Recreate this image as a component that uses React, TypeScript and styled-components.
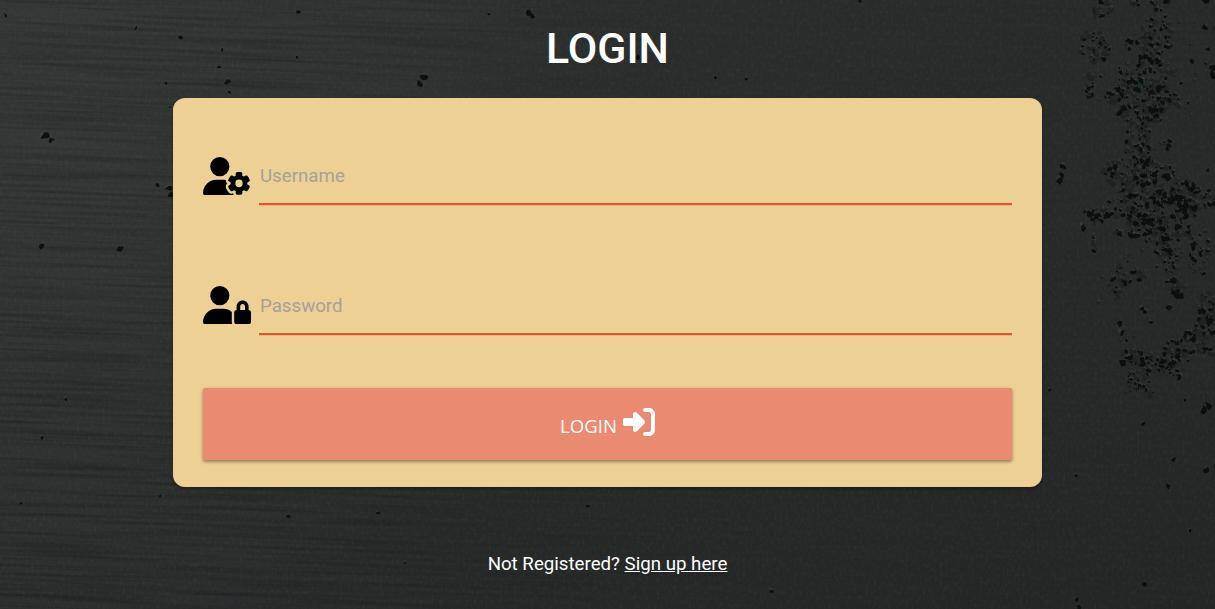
import React from 'react';
import styled, { createGlobalStyle } from 'styled-components';
import { FaUserGear, FaUserLock, FaRightToBracket } from 'react-icons/fa6';

const GlobalStyle = createGlobalStyle`
  * { box-sizing: border-box; }
  body {
    margin: 0;
    background: #272b2b;
    font-family: Roboto, "Liberation Sans", sans-serif;
    overflow: hidden;
  }
`;

const Page = styled.main`
  position: relative;
  height: 100vh;
  display: flex;
  flex-direction: column;
  align-items: center;
  isolation: isolate;
`;

const Wall = styled.svg`
  position: absolute;
  inset: 0;
  z-index: -1;
`;

const Title = styled.h1`
  margin: 0;
  padding-top: 24px;
  height: 98px;
  font-size: 42.8px;
  line-height: 48px;
  font-weight: 500;
  color: #fff;
`;

const Card = styled.form`
  width: 869px;
  height: 389px;
  padding: 30px;
  display: flex;
  flex-direction: column;
  background: #edd194;
  border-radius: 12px;
  box-shadow: 0 2px 3px rgba(0, 0, 0, 0.3);
`;

const Field = styled.label`
  height: 130px;
  flex: none;
  display: flex;
  align-items: flex-start;
  gap: 8px;
  padding-top: 22px;
`;

const FieldIcon = styled.span<{ $top: number }>`
  display: flex;
  width: 48px;
  padding-top: ${(p) => p.$top}px;
  color: #000;
`;

const Input = styled.input`
  flex: 1;
  min-width: 0;
  height: 55px;
  padding: 0 0 1px 1px;
  border: 0;
  border-bottom: 2px solid #dd5437;
  box-shadow: 0 1px 0 rgba(240, 110, 70, 0.3);
  background: transparent;
  font: 400 18.7px Roboto, sans-serif;
  outline: none;
  &::placeholder { color: #a5a19b; opacity: 1; }
`;

const Submit = styled.button`
  height: 72px;
  flex: none;
  display: flex;
  align-items: center;
  justify-content: center;
  gap: 6px;
  padding: 0;
  border: 0;
  border-radius: 2px;
  background: #e98a71;
  color: #fff;
  font: 400 18.6px "Open Sans", "Noto Sans", sans-serif;
  box-shadow: 0 2px 3px rgba(0, 0, 0, 0.3), 0 1px 5px rgba(0, 0, 0, 0.14);
`;

const SubmitLabel = styled.span`
  padding-top: 3px;
`;

const SubmitIcon = styled(FaRightToBracket)`
  margin-top: -5px;
`;

const Footer = styled.p`
  margin: 64px 0 0;
  font-size: 18.7px;
  line-height: 26px;
  color: #fff;
`;

const SignUp = styled.a`
  color: inherit;
  text-decoration: underline;
`;

// Small repeatable generator so the wall looks the same on every load.
const seeded = (seed: number) => () => {
  seed = (seed * 1664525 + 1013904223) % 4294967296;
  return seed / 4294967296;
};

// Areas of flaked paint: centre x, centre y, radius x, radius y, flakes.
const patches = [
  [1101, 9, 12, 11, 12], [1160, 4, 10, 7, 8], [1136, 3, 4, 3, 4],
  [1095, 47, 16, 16, 30], [1089, 86, 5, 12, 9], [1155, 36, 20, 18, 45],
  [1131, 43, 8, 6, 7], [1155, 57, 18, 6, 18], [1147, 76, 29, 16, 60],
  [1143, 97, 38, 14, 95], [1142, 115, 24, 9, 42], [1136, 133, 14, 14, 24],
  [1140, 152, 15, 8, 22], [1166, 143, 6, 7, 7], [1138, 172, 38, 14, 90],
  [1158, 190, 42, 13, 75], [1152, 209, 49, 15, 120], [1191, 199, 24, 13, 38],
  [1154, 230, 38, 13, 70], [1095, 215, 13, 8, 13], [1094, 243, 4, 8, 7],
  [1169, 253, 13, 20, 40], [1199, 253, 12, 24, 23], [1120, 281, 11, 16, 19],
  [1139, 274, 7, 6, 8], [1176, 289, 9, 9, 15], [1208, 305, 10, 13, 15],
  [1207, 323, 13, 15, 36], [1193, 342, 12, 12, 22], [1137, 358, 18, 8, 28],
  [1158, 365, 15, 8, 22], [1175, 351, 13, 11, 22], [1139, 379, 13, 12, 22],
  [1177, 370, 7, 9, 9], [1206, 352, 7, 6, 8], [1140, 392, 16, 6, 8],
  [1160, 70, 75, 65, 25], [1155, 300, 60, 80, 22],
];

// Isolated pits: x, y, size.
const pits = [
  [6, 16, 3], [46, 136, 5], [51, 140, 4], [43, 137, 4], [42, 246, 3.5], [121, 249, 5],
  [181, 38, 3], [219, 67, 2], [222, 50, 2.2], [227, 82, 3.5], [229, 92, 2], [166, 83, 2],
  [170, 107, 2], [136, 28, 1.8], [158, 185, 3], [169, 188, 5], [171, 195, 4], [297, 57, 2],
  [299, 12, 3], [424, 77, 4], [420, 84, 4], [489, 14, 1.8], [528, 13, 4], [532, 16, 3],
  [638, 57, 3], [715, 78, 2.5], [746, 79, 1.8], [860, 1, 2], [1063, 166, 4], [1060, 181, 5],
  [1062, 175, 3], [1206, 2, 4], [1213, 68, 5], [1214, 75, 5], [1192, 61, 2.5], [1188, 103, 2.5],
  [1208, 49, 2.5], [1208, 170, 2.5], [1083, 227, 4], [1084, 229, 3], [1120, 325, 4],
  [1122, 333, 4], [1170, 308, 4], [1142, 308, 3], [1151, 322, 2], [1050, 390, 2],
  [1203, 411, 5], [1208, 406, 4], [1185, 400, 2], [1143, 424, 2.5], [1173, 460, 3],
  [1206, 470, 3.5], [1168, 486, 3], [1076, 475, 2], [1190, 531, 2], [1145, 584, 3],
  [1077, 600, 4], [1079, 607, 3], [378, 513, 2.8], [288, 516, 2.5], [21, 503, 1.8],
  [66, 399, 2], [42, 438, 2], [405, 563, 1.8], [772, 591, 2.5], [588, 506, 1.8], [160, 496, 1.5],
];

const flake = (x: number, y: number, r: number, rnd: () => number) => {
  const tilt = rnd() * 3.14;
  const points = Array.from({ length: 7 }, (_, i) => {
    const a = (i / 7) * Math.PI * 2;
    const d = r * (0.45 + rnd() * 0.8);
    const px = Math.cos(a) * d;
    const py = Math.sin(a) * d * 0.7;
    return `${(x + px * Math.cos(tilt) - py * Math.sin(tilt)).toFixed(1)} ${(y + px * Math.sin(tilt) + py * Math.cos(tilt)).toFixed(1)}`;
  });
  return `M${points.join('L')}Z`;
};

const buildFlakes = () => {
  const rnd = seeded(91);
  let dark = '';
  let soft = '';
  let light = '';
  for (const [cx, cy, rx, ry, count] of patches) {
    for (let i = 0; i < count * 1.3; i++) {
      const a = rnd() * Math.PI * 2;
      const d = Math.sqrt(rnd());
      const x = cx + Math.cos(a) * rx * d;
      const y = cy + Math.sin(a) * ry * d;
      const r = 1 + rnd() * rnd() * 4.2;
      light += flake(x + 0.8, y - 1.8, r * 0.75, rnd);
      if (rnd() > 0.5) dark += flake(x, y, r, rnd);
      else soft += flake(x, y, r * 1.3, rnd);
    }
  }
  for (const [x, y, r] of pits) {
    light += flake(x - 0.5, y - 1.5, r * 0.8, rnd);
    dark += flake(x, y, r, rnd);
  }
  return { dark, soft, light };
};

const flakes = buildFlakes();

const PaintedWall = () => (
  <Wall width="100%" height="100%" viewBox="0 0 1215 609" preserveAspectRatio="none" aria-hidden="true">
    <defs>
      <linearGradient id="across" x1="0" y1="0" x2="1" y2="0.12">
        <stop offset="0" stopColor="#343837" />
        <stop offset="0.25" stopColor="#313534" />
        <stop offset="0.55" stopColor="#2a2d2c" />
        <stop offset="1" stopColor="#282a29" />
      </linearGradient>
      <linearGradient id="down" x1="0" y1="0" x2="0" y2="1">
        <stop offset="0.3" stopColor="#1d2020" stopOpacity="0" />
        <stop offset="1" stopColor="#1d2020" stopOpacity="0.35" />
      </linearGradient>
      <linearGradient id="fade" x1="0" x2="1" y1="0" y2="0">
        <stop offset="0.2" stopColor="#fff" />
        <stop offset="0.6" stopColor="#fff" stopOpacity="0.12" />
      </linearGradient>
      <mask id="leftSide"><rect width="1215" height="609" fill="url(#fade)" /></mask>
      <filter id="strokes" x="0" y="0" width="100%" height="100%" colorInterpolationFilters="sRGB">
        <feTurbulence type="fractalNoise" baseFrequency="0.006 0.3" numOctaves="3" seed="4" />
        <feColorMatrix values="0 0 0 0 0  0 0 0 0 0  0 0 0 0 0  1.6 0 0 0 -0.65" />
      </filter>
      <filter id="grain" x="0" y="0" width="100%" height="100%" colorInterpolationFilters="sRGB">
        <feTurbulence type="fractalNoise" baseFrequency="0.35 0.22" numOctaves="3" seed="8" />
        <feColorMatrix values="0 0 0 0 0.58  0 0 0 0 0.6  0 0 0 0 0.59  0.8 0 0 0 -0.36" />
      </filter>
      <filter id="soften"><feGaussianBlur stdDeviation="0.6" /></filter>
    </defs>
    <rect width="1215" height="609" fill="url(#across)" />
    <rect width="1215" height="609" fill="url(#down)" />
    <g mask="url(#leftSide)">
      <rect x="-60" y="-80" width="1335" height="770" filter="url(#strokes)" opacity="0.28" transform="rotate(2)" />
    </g>
    <rect width="1215" height="609" filter="url(#grain)" opacity="0.2" />
    <g filter="url(#soften)">
      <path d={flakes.light} fill="#414645" opacity="0.5" />
      <path d={flakes.soft} fill="#191b1b" opacity="0.6" />
      <path d={flakes.dark} fill="#070909" opacity="0.9" />
    </g>
  </Wall>
);

export default function App() {
  return (
    <Page>
      <GlobalStyle />
      <PaintedWall />
      <Title>LOGIN</Title>
      <Card onSubmit={(e: React.FormEvent) => e.preventDefault()}>
        <Field>
          <FieldIcon $top={7}><FaUserGear size="auto" width={48} height={38} /></FieldIcon>
          <Input type="text" placeholder="Username" />
        </Field>
        <Field>
          <FieldIcon $top={6}><FaUserLock size="auto" width={48} height={38} /></FieldIcon>
          <Input type="password" placeholder="Password" />
        </Field>
        <Submit type="submit">
          <SubmitLabel>LOGIN</SubmitLabel>
          <SubmitIcon size={32} />
        </Submit>
      </Card>
      <Footer>
        Not Registered? <SignUp href="#">Sign up here</SignUp>
      </Footer>
    </Page>
  );
}
